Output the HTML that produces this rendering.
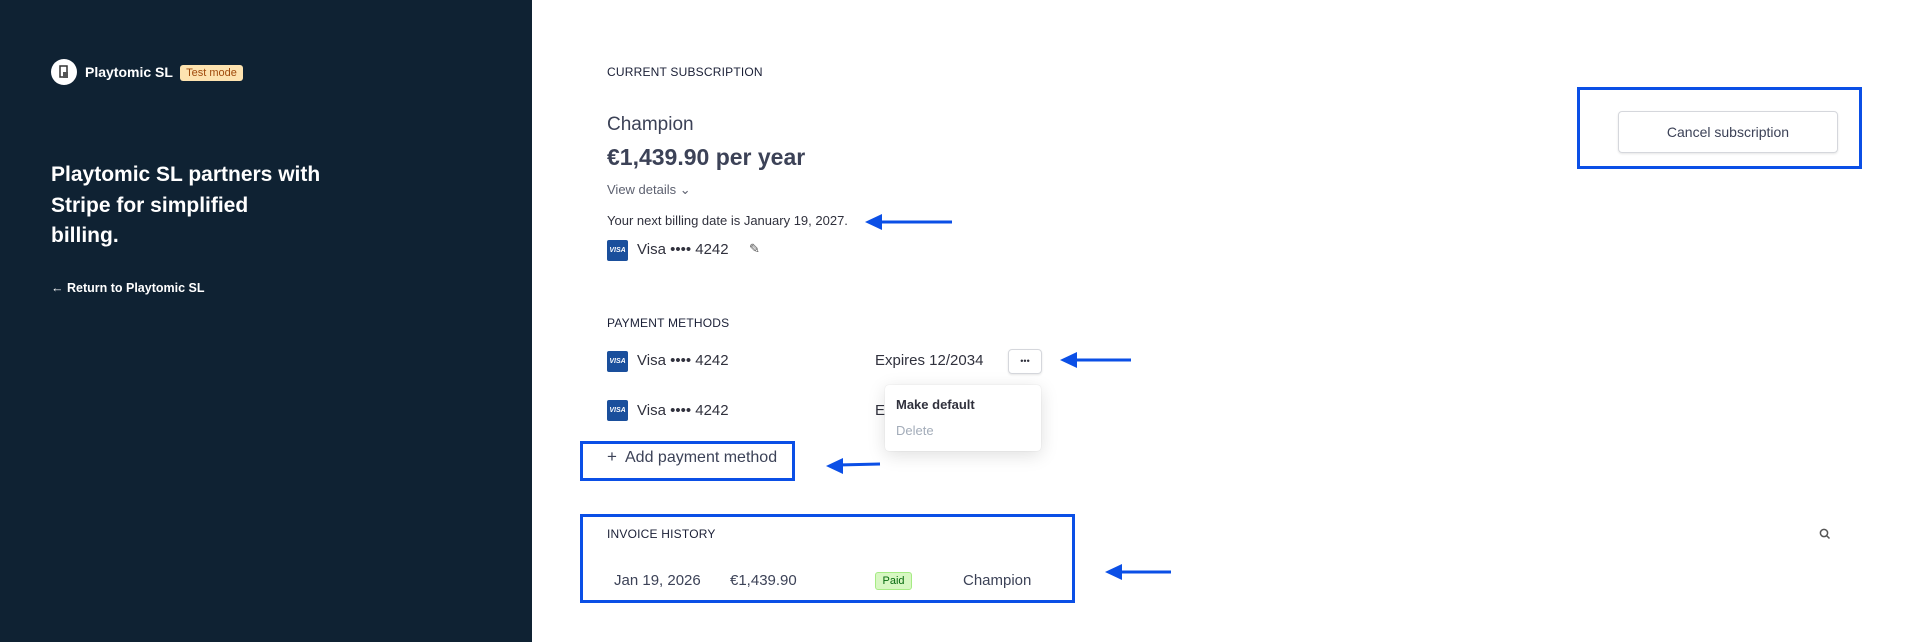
<!DOCTYPE html>
<html><head><meta charset="utf-8"><style>
*{margin:0;padding:0;box-sizing:border-box}
body{width:1911px;height:642px;position:relative;background:#fff;font-family:"Liberation Sans",sans-serif;overflow:hidden;color:#30313d}
.a{position:absolute;white-space:nowrap}
.left{position:absolute;left:0;top:0;width:532px;height:642px;background:#0f2233}
.visa{position:absolute;width:21px;height:21px;background:#1a4f9c;border-radius:2px;color:#fff;font-size:7px;font-weight:bold;text-align:center;line-height:21px;font-style:italic}
.box{position:absolute;border:3px solid #0b4fe6}
.lbl{font-size:12px;color:#1a1f36;letter-spacing:.2px}
</style></head><body>
<div class="left">
 <div class="a" style="left:51px;top:59px;width:26px;height:26px;border-radius:50%;background:#fff"></div>
 <svg class="a" style="left:57px;top:64px" width="14" height="16" viewBox="0 0 14 16"><rect x="3" y="2" width="7" height="11" fill="none" stroke="#333" stroke-width="1.5"/><rect x="6" y="8" width="5" height="6" fill="#555"/></svg>
 <div class="a" style="left:85px;top:64px;font-size:14px;font-weight:bold;color:#fff">Playtomic SL</div>
 <div class="a" style="left:180px;top:65px;width:63px;height:16px;background:#fde3b0;border-radius:3px;color:#a04a0c;font-size:11px;line-height:16px;text-align:center">Test mode</div>
 <div class="a" style="left:51px;top:160px;font-size:21px;font-weight:bold;color:#fff;line-height:30.5px">Playtomic SL partners with<br>Stripe for simplified<br>billing.</div>
 <div class="a" style="left:51px;top:281px;font-size:12.5px;font-weight:bold;color:#fff">&#8592; Return to Playtomic SL</div>
</div>

<div class="a lbl" style="left:607px;top:65px">CURRENT SUBSCRIPTION</div>
<div class="a" style="left:607px;top:114px;font-size:19px;color:#3c4257">Champion</div>
<div class="a" style="left:607px;top:144px;font-size:23px;font-weight:bold;color:#3c4257">€1,439.90 per year</div>
<div class="a" style="left:607px;top:182px;font-size:13px;color:#5d6170">View details &#8964;</div>
<div class="a" style="left:607px;top:213px;font-size:13px;color:#30313d">Your next billing date is January 19, 2027.</div>
<div class="visa" style="left:607px;top:240px">VISA</div>
<div class="a" style="left:637px;top:241px;font-size:15px;color:#30313d">Visa •••• 4242</div>
<div class="a" style="left:749px;top:241px;font-size:13px;color:#555">&#9998;</div>

<div class="a lbl" style="left:607px;top:316px">PAYMENT METHODS</div>
<div class="visa" style="left:607px;top:351px">VISA</div>
<div class="a" style="left:637px;top:352px;font-size:15px">Visa •••• 4242</div>
<div class="a" style="left:875px;top:352px;font-size:15px">Expires 12/2034</div>
<div class="a" style="left:1008px;top:349px;width:34px;height:25px;border:1px solid #d5d7dc;border-radius:4px;box-shadow:0 1px 2px rgba(0,0,0,.1);font-size:9px;text-align:center;line-height:22px">•••</div>
<div class="visa" style="left:607px;top:400px">VISA</div>
<div class="a" style="left:637px;top:402px;font-size:15px">Visa •••• 4242</div>
<div class="a" style="left:875px;top:402px;font-size:15px">Ex</div>
<div class="a" style="left:885px;top:385px;width:156px;height:66px;background:#fff;border-radius:4px;box-shadow:0 4px 18px rgba(0,0,0,.13),0 0 1px rgba(0,0,0,.15)"></div>
<div class="a" style="left:896px;top:397px;font-size:13px;font-weight:bold;color:#30313d">Make default</div>
<div class="a" style="left:896px;top:423px;font-size:13px;color:#a3acb9">Delete</div>

<div class="box" style="left:580px;top:441px;width:215px;height:40px"></div>
<div class="a" style="left:607px;top:447px;font-size:17px;color:#3c4257">+</div>
<div class="a" style="left:625px;top:449px;font-size:16px;color:#3c4257">Add payment method</div>

<div class="box" style="left:580px;top:514px;width:495px;height:89px"></div>
<div class="a lbl" style="left:607px;top:527px">INVOICE HISTORY</div>
<div class="a" style="left:614px;top:572px;font-size:15px;color:#3c4257">Jan 19, 2026</div>
<div class="a" style="left:730px;top:572px;font-size:15px;color:#3c4257">€1,439.90</div>
<div class="a" style="left:875px;top:572px;width:37px;height:18px;background:#d7f7c2;border:1px solid #a6eb84;border-radius:3px;color:#05690d;font-size:11px;text-align:center;line-height:16px">Paid</div>
<div class="a" style="left:963px;top:572px;font-size:15px;color:#3c4257">Champion</div>
<svg class="a" style="left:1819px;top:528px" width="12" height="12" viewBox="0 0 12 12"><circle cx="5" cy="5" r="3.6" fill="none" stroke="#555" stroke-width="1.5"/><line x1="7.6" y1="7.6" x2="10.5" y2="10.5" stroke="#555" stroke-width="1.5"/></svg>

<div class="box" style="left:1577px;top:87px;width:285px;height:82px"></div>
<div class="a" style="left:1618px;top:111px;width:220px;height:42px;border:1px solid #d5d7dc;border-radius:4px;box-shadow:0 1px 2px rgba(0,0,0,.1);font-size:14px;text-align:center;line-height:40px;color:#3c4257">Cancel subscription</div>

<svg class="a" style="left:0;top:0" width="1911" height="642">
<g fill="#0b4fe6" stroke="#0b4fe6">
<line x1="878" y1="222" x2="952" y2="222" stroke-width="3"/><polygon points="865,222 882,214 882,230" stroke="none"/>
<line x1="1072" y1="360" x2="1131" y2="360" stroke-width="3"/><polygon points="1060,360 1077,352 1077,368" stroke="none"/>
<line x1="838" y1="465" x2="880" y2="464" stroke-width="3"/><polygon points="826,466 843,458 843,474" stroke="none"/>
<line x1="1117" y1="572" x2="1171" y2="572" stroke-width="3"/><polygon points="1105,572 1122,564 1122,580" stroke="none"/>
</g></svg>
</body></html>
